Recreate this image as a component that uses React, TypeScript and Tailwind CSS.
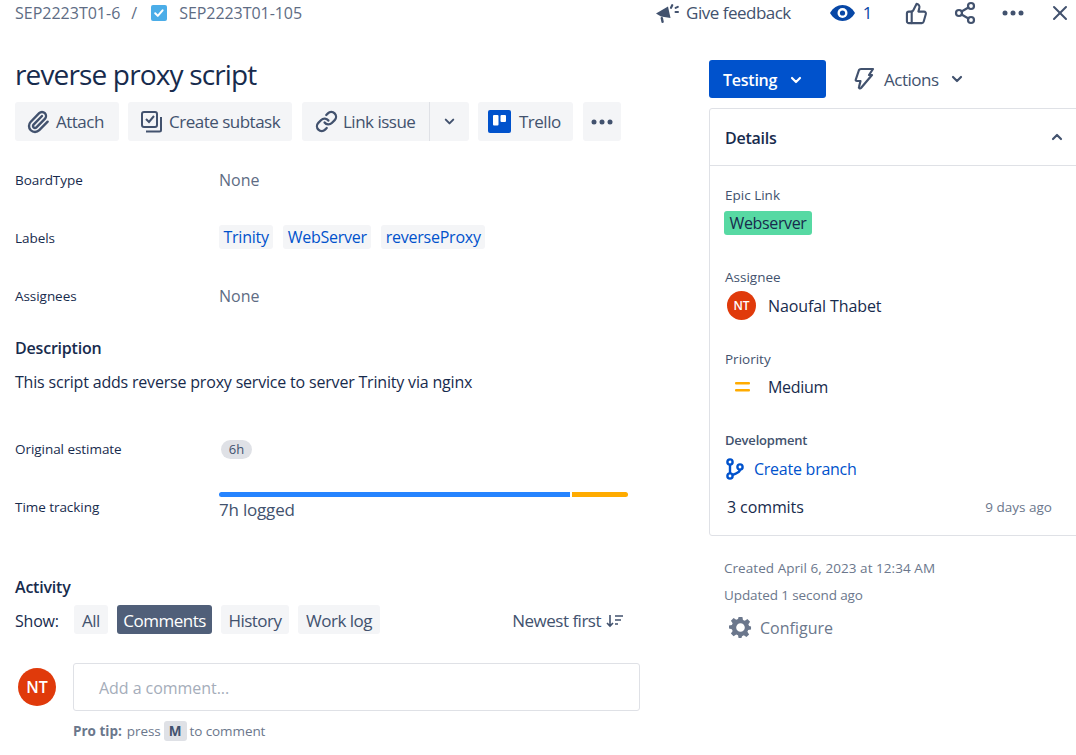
import { ChevronDown, ChevronUp, Link, Paperclip, Share2, ThumbsUp, X } from "lucide-react";
import type { ReactNode } from "react";

function Dots({ className = "" }: { className?: string }) {
  return (
    <svg className={className} width="22" height="6" viewBox="0 0 22 6" fill="currentColor">
      <circle cx="3" cy="3" r="2.5" />
      <circle cx="11" cy="3" r="2.5" />
      <circle cx="19" cy="3" r="2.5" />
    </svg>
  );
}

function ToolButton({ children, className = "" }: { children: ReactNode; className?: string }) {
  return (
    <div className={`h-[39px] flex items-center bg-[#f4f5f7] rounded-[3px] text-[#42526e] text-[17px] tracking-[-0.5px] ${className}`}>
      {children}
    </div>
  );
}

function FieldRow({ label, children, labelClass = "" }: { label: string; children: ReactNode; labelClass?: string }) {
  return (
    <div className="flex items-center h-[58px]">
      <div className={`w-[204px] text-[13.500px] tracking-[-0.05px] text-[#172b4d] ${labelClass}`}>{label}</div>
      <div className="flex-1 min-w-0">{children}</div>
    </div>
  );
}

function LabelTag({ children }: { children: ReactNode }) {
  return <span className="h-[24px] px-[4.500px] flex items-center bg-[#f4f5f7] rounded-[3px] text-[#0052cc] text-[16px] tracking-[-0.25px]">{children}</span>;
}

function FilterButton({ children, active = false, className = "" }: { children: ReactNode; active?: boolean; className?: string }) {
  return (
    <div className={`h-[29px] pt-[2px] flex items-center rounded-[3px] text-[17px] tracking-[-0.5px] ${active ? "bg-[#505f79] text-white" : "bg-[#f4f5f7] text-[#42526e]"} ${className}`}>
      {children}
    </div>
  );
}

function SideLabel({ children }: { children: ReactNode }) {
  return <div className="text-[13.500px] leading-[18px] text-[#42526e]">{children}</div>;
}

export default function App() {
  return (
    <div className="w-[1076px] h-[755px] overflow-hidden bg-white text-[#172b4d]" style={{ fontFamily: '"Open Sans", "Noto Sans", sans-serif' }}>
      {/* TOP BAR */}
      <div className="h-[26px] flex items-center pl-[15px] text-[#42526e]">
        <span className="text-[16px] tracking-[0px] text-[#5e6c84]">SEP2223T01-6</span>
        <span className="ml-[11px] text-[16px] text-[#5e6c84]">/</span>
        <svg className="ml-[14px]" width="16" height="16" viewBox="0 0 16 16">
          <rect width="16" height="16" rx="2" fill="#4bade8" />
          <path d="M4.2 8.2l2.6 2.7 4.8-5.6" fill="none" stroke="#fff" strokeWidth="2" strokeLinecap="round" strokeLinejoin="round" />
        </svg>
        <span className="ml-[12px] text-[16px] tracking-[-0.05px] text-[#5e6c84]">SEP2223T01-105</span>

        <svg className="ml-[353px]" width="25" height="25" viewBox="0 0 25 25" fill="#42526e">
          <path d="M1 12.5L13 5.500 15.500 17 6 15.500z" />
          <rect x="6" y="16" width="2.400" height="6" rx="1" transform="rotate(-12 7 19)" />
          <rect x="15.500" y="3" width="2.200" height="5" rx="1" transform="rotate(25 16.500 5.500)" />
          <rect x="19.500" y="5.500" width="4.500" height="2" rx="1" transform="rotate(-25 21.500 6.500)" />
          <rect x="19.500" y="10" width="4.500" height="2" rx="1" />
        </svg>
        <span className="ml-[6px] text-[17px] tracking-[-0.5px]">Give feedback</span>

        <svg className="ml-[39px]" width="25" height="16" viewBox="0 0 25 16">
          <path d="M0 8C3 2.800 7.500 0 12.500 0S22 2.800 25 8c-3 5.200-7.500 8-12.500 8S3 13.200 0 8z" fill="#0747a6" />
          <circle cx="12.500" cy="8" r="5" fill="#fff" />
          <circle cx="12.500" cy="8" r="2.600" fill="#0747a6" />
        </svg>
        <span className="ml-[8px] text-[17px] text-[#0747a6]">1</span>

        <ThumbsUp className="ml-[32px] text-[#42526e]" size={23} strokeWidth={2.2} />
        <Share2 className="ml-[25px] text-[#42526e]" size={24} strokeWidth={2.2} />
        <Dots className="ml-[25px] text-[#42526e]" />
        <X className="ml-[24px] text-[#42526e]" size={24} strokeWidth={2} />
      </div>

      <div className="flex">
        {/* LEFT COLUMN */}
        <div className="w-[709px] pl-[15px] shrink-0">
          <h1 className="mt-[28px] text-[28px] leading-[40px] tracking-[-0.85px] font-normal text-[#172b4d]">reverse proxy script</h1>

          <div className="mt-[8px] flex items-center">
            <ToolButton className="w-[104px] pl-[11px]">
              <Paperclip size={24} strokeWidth={2.4} />
              <span className="ml-[6px] pt-[1px]">Attach</span>
            </ToolButton>
            <ToolButton className="ml-[9px] w-[164px] pl-[12px]">
              <svg width="24" height="24" viewBox="0 0 24 24" fill="none" stroke="#42526e" strokeWidth="2">
                <rect x="2" y="2" width="15" height="15" rx="2" />
                <path d="M6 9l3 3 5-6" />
                <path d="M21 7v13a1.500 1.500 0 0 1-1.500 1.500H6" />
              </svg>
              <span className="ml-[5px] pt-[1px]">Create subtask</span>
            </ToolButton>
            <ToolButton className="ml-[10px] w-[127px] pl-[13px] rounded-r-none">
              <Link size={23} strokeWidth={2.4} />
              <span className="ml-[5px] pt-[1px]">Link issue</span>
            </ToolButton>
            <div className="w-[1px] h-[39px] bg-[#dfe1e6]" />
            <ToolButton className="w-[39px] justify-center rounded-l-none">
              <ChevronDown size={15} strokeWidth={3.2} />
            </ToolButton>
            <ToolButton className="ml-[9px] w-[95px] pl-[10px]">
              <svg width="23" height="23" viewBox="0 0 23 23">
                <rect width="23" height="23" rx="2" fill="#0052cc" />
                <rect x="5" y="5" width="5.500" height="10.500" rx="1" fill="#fff" />
                <rect x="12.500" y="5" width="5.500" height="7" rx="1" fill="#fff" />
              </svg>
              <span className="ml-[8px] pt-[1px]">Trello</span>
            </ToolButton>
            <ToolButton className="ml-[10px] w-[38px] justify-center">
              <Dots />
            </ToolButton>
          </div>

          {/* FIELDS */}
          <div className="mt-[10px] w-[613px]">
            <FieldRow label="BoardType">
              <span className="text-[16px] text-[#5e6c84]">None</span>
            </FieldRow>
            <FieldRow label="Labels">
              <div className="flex gap-[10px] -mt-[2px]">
                <LabelTag>Trinity</LabelTag>
                <LabelTag>WebServer</LabelTag>
                <LabelTag>reverseProxy</LabelTag>
              </div>
            </FieldRow>
            <FieldRow label="Assignees">
              <span className="text-[16px] text-[#5e6c84]">None</span>
            </FieldRow>
          </div>

          <h2 className="mt-[11px] text-[16px] leading-[24px] font-semibold tracking-[-0.2px]">Description</h2>
          <p className="mt-[10px] text-[16px] leading-[24px] tracking-[-0.19px]">This script adds reverse proxy service to server Trinity via nginx</p>

          <div className="mt-[25px] w-[613px]">
            <FieldRow label="Original estimate" labelClass="pt-[2px]">
              <span className="inline-flex items-center justify-center h-[19px] w-[31px] ml-[2px] rounded-full bg-[#dfe1e6] text-[13px] text-[#42526e]">6h</span>
            </FieldRow>
            <FieldRow label="Time tracking" labelClass="pt-[2px]">
              <div className="w-[409px] mt-[2px]">
                <div className="flex gap-[2px] h-[5px]">
                  <div className="w-[351px] bg-[#2684ff] rounded-l-full" />
                  <div className="flex-1 bg-[#ffab00] rounded-r-full" />
                </div>
                <div className="mt-[1px] text-[17px] leading-[24px] tracking-[-0.2px] text-[#42526e]">7h logged</div>
              </div>
            </FieldRow>
          </div>

          <h2 className="mt-[40px] text-[16px] leading-[24px] font-semibold tracking-[-0.2px]">Activity</h2>

          <div className="mt-[6px] w-[609px] flex items-center">
            <span className="pt-[2px] text-[16px] tracking-[-0.2px] mr-[15px]">Show:</span>
            <div className="flex gap-[9.500px]">
              <FilterButton className="w-[34px] justify-center">All</FilterButton>
              <FilterButton active className="px-[6px]">Comments</FilterButton>
              <FilterButton className="px-[7px]">History</FilterButton>
              <FilterButton className="px-[8px]">Work log</FilterButton>
            </div>
            <div className="ml-auto pt-[2px] flex items-center text-[17px] tracking-[-0.5px] text-[#42526e]">
              Newest first
              <svg className="ml-[5px]" width="18" height="14" viewBox="0 0 18 14" fill="none" stroke="#42526e" strokeWidth="1.600">
                <path d="M4 1v11M1 9l3 3 3-3M9 2h8M9 6h6M9 10h3" />
              </svg>
            </div>
          </div>

          <div className="mt-[29px] flex items-center">
            <div className="ml-[3px] w-[38px] h-[38px] rounded-full bg-[#e03a0b] text-white font-semibold text-[16px] flex items-center justify-center">NT</div>
            <div className="ml-[17px] w-[567px] h-[48px] border border-[#dfe1e6] rounded-[3px] pl-[25px] pt-[1px] flex items-center text-[16px] tracking-[-0.05px] text-[#a5adba]">Add a comment...</div>
          </div>

          <div className="mt-[10px] ml-[58px] flex items-center text-[13.500px] tracking-[-0.1px] text-[#6b778c]">
            <span className="font-bold tracking-[0px]">Pro tip:</span>
            <span className="ml-[5px]">press</span>
            <span className="ml-[3px] w-[23px] h-[20px] rounded-[3px] bg-[#dfe1e6] flex items-center justify-center font-bold text-[#42526e]">M</span>
            <span className="ml-[3px]">to comment</span>
          </div>
        </div>

        {/* RIGHT COLUMN */}
        <div className="flex-1 min-w-0 relative">
          <div className="mt-[34px] flex items-center">
            <div className="w-[117px] h-[38px] pt-[1px] bg-[#0052cc] rounded-[3px] text-white text-[16px] font-semibold tracking-[-0.25px] flex items-center pl-[14px]">
              Testing
              <ChevronDown className="ml-[11px]" size={16} strokeWidth={3.2} />
            </div>
            <svg className="ml-[27px]" width="22" height="24" viewBox="0 0 22 24" fill="none" stroke="#42526e" strokeWidth="2.200" strokeLinejoin="round">
              <path d="M8 2h12l-4 6h3L8 21c-1 1-2.500 0-2-1l1.500-6H4c-1 0-1.500-.6-1.200-1.500L6 3c.3-.7 1-1 2-1z" />
            </svg>
            <span className="ml-[9px] pt-[1px] text-[17px] tracking-[-0.5px] text-[#42526e]">Actions</span>
            <ChevronDown className="ml-[10px] text-[#42526e]" size={16} strokeWidth={3.2} />
          </div>

          <div className="mt-[10px] w-[380px] h-[428px] border border-[#dfe1e6] rounded-[3px]">
            <div className="relative h-[57px] pl-[15px] pt-[1px] border-b border-[#dfe1e6] flex items-center">
              <span className="text-[16px] font-semibold tracking-[-0.25px]">Details</span>
              <ChevronUp className="absolute left-[339px] top-[20px] text-[#42526e]" size={16} strokeWidth={3.2} />
            </div>
            <div className="pl-[15px]">
              <div className="mt-[20px]"><SideLabel>Epic Link</SideLabel></div>
              <div className="mt-[7px] -ml-[1px] w-[88px] h-[24px] bg-[#57d9a3] rounded-[3px] flex items-center justify-center text-[16px] tracking-[-0.35px]">Webserver</div>

              <div className="mt-[33px]"><SideLabel>Assignee</SideLabel></div>
              <div className="mt-[5px] flex items-center h-[29px]">
                <div className="ml-[2px] w-[29px] h-[29px] rounded-full bg-[#e03a0b] text-white text-[12px] font-semibold flex items-center justify-center">NT</div>
                <span className="ml-[12px] text-[16px] tracking-[-0.1px]">Naoufal Thabet</span>
              </div>

              <div className="mt-[30px]"><SideLabel>Priority</SideLabel></div>
              <div className="mt-[7px] h-[24px] flex items-center">
                <svg className="ml-[10px]" width="15" height="12" viewBox="0 0 15 12" fill="#ffab00">
                  <rect y="1" width="15" height="2.400" rx="1" />
                  <rect y="8" width="15" height="2.400" rx="1" />
                </svg>
                <span className="ml-[18px] text-[16px] tracking-[-0.3px]">Medium</span>
              </div>

              <div className="mt-[32px] text-[13px] leading-[18px] text-[#42526e] font-semibold tracking-[-0.2px]">Development</div>
              <div className="mt-[8px] h-[24px] flex items-center">
                <svg className="ml-[1px]" width="18" height="22" viewBox="0 0 18 22" fill="none" stroke="#0052cc" strokeWidth="2.400">
                  <circle cx="4" cy="4" r="2.600" />
                  <circle cx="4" cy="18" r="2.600" />
                  <circle cx="14" cy="9" r="2.600" />
                  <path d="M4 6.600v8.800M14 11.600c0 3.500-4 3.400-7.500 5.400" />
                </svg>
                <span className="ml-[10px] text-[16px] tracking-[-0.25px] text-[#0052cc]">Create branch</span>
              </div>

              <div className="mt-[14px] w-[327px] h-[24px] flex items-center justify-between">
                <span className="ml-[2px] text-[16px] tracking-[-0.1px]">3 commits</span>
                <span className="text-[13.500px] text-[#6b778c]">9 days ago</span>
              </div>
            </div>
          </div>

          <div className="pl-[15px] text-[13.500px] leading-[18px] text-[#6b778c]">
            <div className="mt-[23px] tracking-[0.05px]">Created April 6, 2023 at 12:34 AM</div>
            <div className="mt-[9px] tracking-[-0.1px]">Updated 1 second ago</div>
            <div className="mt-[12px] flex items-center text-[16px]">
              <svg className="ml-[5px]" width="23" height="23" viewBox="0 0 24 24" fill="#6b778c">
                <path fillRule="evenodd" d="M10 1h4l.6 3.100 1.900.8 2.700-1.800 2.800 2.800-1.800 2.700.8 1.900L23 11v3l-3 .6-.8 1.900 1.800 2.700-2.800 2.800-2.700-1.800-1.900.8L13 23h-3l-.6-2.900-1.900-.8-2.700 1.800L2 18.300l1.800-2.700-.8-1.900L0 13v-3l3-.6.8-1.900L2 4.900l2.800-2.800 2.700 1.800 1.900-.8zM12 7.500a4.500 4.500 0 1 0 0 9 4.500 4.500 0 0 0 0-9z" />
              </svg>
              <span className="ml-[8px]">Configure</span>
            </div>
          </div>
        </div>
      </div>
    </div>
  );
}
